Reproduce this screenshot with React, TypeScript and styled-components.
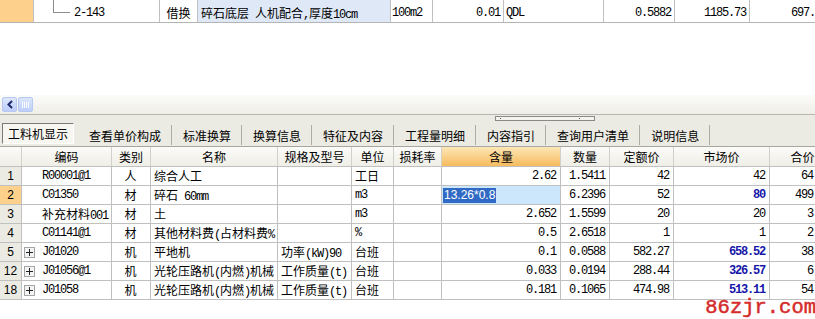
import React, { FC } from "react";
import styled, { createGlobalStyle, css } from "styled-components";

const GlobalStyle = createGlobalStyle`
  html, body {
    margin: 0;
    padding: 0;
    background: #ffffff;
  }
  body {
    font-family: "Noto Sans CJK SC", sans-serif;
    color: #000;
  }
`;

const Page = styled.div`
  position: relative;
  width: 815px;
  height: 319px;
  overflow: hidden;
  background: #fff;
  display: flex;
  flex-direction: column;
`;

/* ---------- shared cell text ---------- */

const Han = styled.span`
  font-family: "Noto Sans CJK SC", sans-serif;
  font-size: 12px;
  letter-spacing: 0;
`;

const Text = styled.span`
  white-space: pre;
`;

// ascii runs keep the mono face, chinese runs switch to the CJK face
const Mixed: FC<{ text: string }> = ({ text }) => (
  <Text>
    {text
      .split(/([\u3000-\u9fff\uff00-\uffef]+)/)
      .map((part, i) => (i % 2 ? <Han key={i}>{part}</Han> : part))}
  </Text>
);

type Align = "left" | "center" | "right";

const cellBase = css<{ $align?: Align; $bg?: string }>`
  box-sizing: border-box;
  display: flex;
  align-items: center;
  justify-content: ${({ $align }) =>
    $align === "right" ? "flex-end" : $align === "center" ? "center" : "flex-start"};
  overflow: hidden;
  white-space: nowrap;
  font-family: "Liberation Mono", monospace;
  font-size: 12px;
  letter-spacing: -1.2px;
  background: ${({ $bg }) => $bg || "#ffffff"};
  border-right: 1px solid #c0c0c0;
`;

/* ---------- top (parent) grid row ---------- */

const TopRow = styled.div`
  display: grid;
  grid-template-columns: 34px 126px 38px 193px 42px 71px 100px 71px 75px 80px;
  height: 23px;
  border-bottom: 1px solid #b4b4b4;
  box-sizing: border-box;
  flex: none;
`;

const TopCell = styled.div<{ $align?: Align; $bg?: string; $pad?: string }>`
  ${cellBase};
  padding: ${({ $pad }) => $pad || "3px 3px 0 3px"};
`;

const TreeElbow = styled.span`
  align-self: flex-start;
  width: 17px;
  height: 13px;
  flex: none;
  box-sizing: border-box;
  border-left: 1px solid #8c8c8c;
  border-bottom: 1px solid #8c8c8c;
  margin-top: -3px;
  margin-right: 4px;
`;

/* ---------- empty area and scroller ---------- */

const EmptyArea = styled.div`
  height: 72px;
  flex: none;
  background: #ffffff;
`;

const ScrollStrip = styled.div`
  height: 20px;
  flex: none;
  box-sizing: border-box;
  border-bottom: 1px solid #b9b7ab;
  background: linear-gradient(#fbfbf9, #efeee8);
  display: flex;
  align-items: flex-start;
  padding: 2px 0 0 2px;
  gap: 1px;
`;

const ScrollButton = styled.div`
  width: 15px;
  height: 15px;
  box-sizing: border-box;
  border: 1px solid #b7c9f1;
  border-radius: 2px;
  background: linear-gradient(#dce6fc, #bccffa);
  display: flex;
  align-items: center;
  justify-content: center;
`;

/* ---------- tab bar ---------- */

const TabBar = styled.div`
  position: relative;
  height: 32px;
  flex: none;
  box-sizing: border-box;
  background: #ecebe3;
  border-bottom: 1px solid #a7a6a0;
  display: flex;
  align-items: flex-start;
  padding: 8px 0 0 2px;
`;

const Tab = styled.div<{ $active?: boolean }>`
  height: 21px;
  box-sizing: border-box;
  display: flex;
  align-items: center;
  font-size: 12px;
  white-space: nowrap;
  color: #000;
  ${({ $active }) =>
    $active
      ? css`
          padding: 0 5px;
          margin-right: 4px;
          background: #f7f6f1;
          border-top: 1px solid #7a7a7a;
          border-left: 1px solid #7a7a7a;
          border-right: 1px solid #ffffff;
          border-bottom: 1px solid #ffffff;
        `
      : css`
          padding: 0 10px 0 11px;
          border-right: 1px solid #aeada4;
          margin-top: 2px;
          height: 20px;
        `}
`;

const SplitGrip = styled.div`
  position: absolute;
  left: 495px;
  top: 1px;
  width: 100px;
  height: 5px;
  box-sizing: border-box;
  border: 1px solid #8a8a86;
  background: #f4f3ee;
  display: flex;
  justify-content: space-between;
  padding: 1px 14px 0 4px;
  &::before,
  &::after {
    content: "";
    width: 1px;
    height: 1px;
    background: #555;
  }
`;

/* ---------- detail grid ---------- */

const COLS = "22px 90px 39px 127px 74px 42px 48px 119px 49px 64px 96px 66px";

const HeadRow = styled.div`
  display: grid;
  grid-template-columns: ${COLS};
  height: 20px;
  flex: none;
  box-sizing: border-box;
  border-bottom: 1px solid #c0c0c0;
`;

const HeadCell = styled.div<{ $hot?: boolean }>`
  box-sizing: border-box;
  display: flex;
  align-items: center;
  justify-content: center;
  font-size: 12px;
  white-space: nowrap;
  overflow: hidden;
  border-right: 1px solid #d3d1c7;
  background: ${({ $hot }) =>
    $hot ? "linear-gradient(#fde6b6, #f6bb5e)" : "linear-gradient(#fbfbf8, #efeee7)"};
`;

const DataRow = styled.div`
  display: grid;
  grid-template-columns: ${COLS};
  height: 19px;
  flex: none;
  box-sizing: border-box;
  border-bottom: 1px solid #c0c0c0;
`;

const Cell = styled.div<{ $align?: Align; $bg?: string; $blue?: boolean }>`
  ${cellBase};
  padding: 0 4px 0 3px;
  ${({ $blue }) =>
    $blue &&
    css`
      color: #1616a8;
      font-weight: bold;
    `}
`;

const RowNo = styled.div<{ $sel?: boolean }>`
  box-sizing: border-box;
  display: flex;
  align-items: center;
  justify-content: center;
  font-family: "Liberation Sans", sans-serif;
  font-size: 12px;
  border-right: 1px solid #c0c0c0;
  background: ${({ $sel }) => ($sel ? "#fdd18c" : "#ecebe3")};
`;

const CodeCell = styled.div`
  ${cellBase};
  padding-left: 2px;
`;

const PlusBox = styled.span<{ $hidden?: boolean }>`
  flex: none;
  width: 11px;
  height: 11px;
  margin-right: 7px;
  box-sizing: border-box;
  border: 1px solid ${({ $hidden }) => ($hidden ? "transparent" : "#a5a5a5")};
  background: ${({ $hidden }) => ($hidden ? "transparent" : "#f4f4f4")};
  display: flex;
  align-items: center;
  justify-content: center;
`;

const EditCell = styled.div`
  ${cellBase};
  background: #cce6fb;
  padding-left: 1px;
`;

const EditSelection = styled.span`
  font-family: "Liberation Sans", sans-serif;
  font-size: 12px;
  letter-spacing: 0;
  background: #316ac5;
  color: #fff;
  padding: 0 1px;
  line-height: 15px;
`;

const Watermark = styled.div`
  position: absolute;
  right: -1px;
  bottom: 0;
  font-family: "Liberation Mono", monospace;
  font-size: 20.5px;
  line-height: 22px;
  color: #d52b2b;
  -webkit-text-stroke: 0.5px #d52b2b;
`;

/* ---------- data ---------- */

interface Item {
  no: string;
  sel?: boolean;
  plus?: boolean;
  code: string;
  kind: string;
  name: string;
  spec: string;
  unit: string;
  qty: string;
  edit?: string;
  amount: string;
  quota: string;
  market: string;
  blue?: boolean;
  total: string;
}

const items: Item[] = [
  { no: "1", code: "R00001@1", kind: "人", name: "综合人工", spec: "", unit: "工日", qty: "2.62", amount: "1.5411", quota: "42", market: "42", total: "64.73" },
  { no: "2", sel: true, code: "C01350", kind: "材", name: "碎石 60mm", spec: "", unit: "m3", qty: "", edit: "13.26*0.8", amount: "6.2396", quota: "52", market: "80", blue: true, total: "499.17" },
  { no: "3", code: "补充材料001", kind: "材", name: "土", spec: "", unit: "m3", qty: "2.652", amount: "1.5599", quota: "20", market: "20", total: "3.12" },
  { no: "4", code: "C01141@1", kind: "材", name: "其他材料费(占材料费%", spec: "", unit: "%", qty: "0.5", amount: "2.6518", quota: "1", market: "1", total: "2.65" },
  { no: "5", plus: true, code: "J01020", kind: "机", name: "平地机", spec: "功率(kW)90", unit: "台班", qty: "0.1", amount: "0.0588", quota: "582.27", market: "658.52", blue: true, total: "38.72" },
  { no: "12", plus: true, code: "J01056@1", kind: "机", name: "光轮压路机(内燃)机械", spec: "工作质量(t)", unit: "台班", qty: "0.033", amount: "0.0194", quota: "288.44", market: "326.57", blue: true, total: "6.34" },
  { no: "18", plus: true, code: "J01058", kind: "机", name: "光轮压路机(内燃)机械", spec: "工作质量(t)", unit: "台班", qty: "0.181", amount: "0.1065", quota: "474.98", market: "513.11", blue: true, total: "54.65" },
];

const headers = ["", "编码", "类别", "名称", "规格及型号", "单位", "损耗率", "含量", "数量", "定额价", "市场价", "合价"];

const tabs = ["查看单价构成", "标准换算", "换算信息", "特征及内容", "工程量明细", "内容指引", "查询用户清单", "说明信息"];

const App: FC = () => (
  <>
    <GlobalStyle />
    <Page>
      <TopRow>
        <TopCell $bg="#fdd18c" />
        <TopCell $pad="3px 3px 0 19px">
          <TreeElbow />
          2-143
        </TopCell>
        <TopCell $align="center"><Mixed text="借换" /></TopCell>
        <TopCell $bg="#dfe8f7"><Mixed text="碎石底层 人机配合,厚度10cm" /></TopCell>
        <TopCell $pad="3px 0 0 1px">100m2</TopCell>
        <TopCell $align="right">0.01</TopCell>
        <TopCell $pad="3px 2px 0 2px">QDL</TopCell>
        <TopCell $align="right">0.5882</TopCell>
        <TopCell $align="right">1185.73</TopCell>
        <TopCell $align="right" $pad="3px 2px 0 0">697.41</TopCell>
      </TopRow>

      <EmptyArea />

      <ScrollStrip>
        <ScrollButton>
          <svg width="8" height="9" viewBox="0 0 8 9">
            <path d="M6 1 L2.5 4.5 L6 8" fill="none" stroke="#1b2b6c" strokeWidth="2" />
          </svg>
        </ScrollButton>
        <ScrollButton>
          <svg width="7" height="6" viewBox="0 0 7 6">
            <path d="M0.5 0v6M2.5 0v6M4.5 0v6M6.5 0v6" stroke="#ffffff" strokeWidth="1" />
          </svg>
        </ScrollButton>
      </ScrollStrip>

      <TabBar>
        <SplitGrip />
        <Tab $active>工料机显示</Tab>
        {tabs.map((t) => (
          <Tab key={t}>{t}</Tab>
        ))}
      </TabBar>

      <HeadRow>
        {headers.map((h, i) => (
          <HeadCell key={i} $hot={h === "含量"}>{h}</HeadCell>
        ))}
      </HeadRow>

      {items.map((r) => (
        <DataRow key={r.no}>
          <RowNo $sel={r.sel}>{r.no}</RowNo>
          <CodeCell>
            <PlusBox $hidden={!r.plus}>
              {r.plus && (
                <svg width="7" height="7" viewBox="0 0 7 7">
                  <path d="M0 3.5h7M3.5 0v7" stroke="#222" strokeWidth="1" />
                </svg>
              )}
            </PlusBox>
            <Mixed text={r.code} />
          </CodeCell>
          <Cell $align="center"><Mixed text={r.kind} /></Cell>
          <Cell><Mixed text={r.name} /></Cell>
          <Cell><Mixed text={r.spec} /></Cell>
          <Cell><Mixed text={r.unit} /></Cell>
          <Cell />
          {r.edit ? (
            <EditCell>
              <EditSelection>{r.edit}</EditSelection>
            </EditCell>
          ) : (
            <Cell $align="right">{r.qty}</Cell>
          )}
          <Cell $align="right">{r.amount}</Cell>
          <Cell $align="right">{r.quota}</Cell>
          <Cell $align="right" $blue={r.blue}>{r.market}</Cell>
          <Cell $align="right">{r.total}</Cell>
        </DataRow>
      ))}

      <Watermark>86zjr.com</Watermark>
    </Page>
  </>
);

export default App;
